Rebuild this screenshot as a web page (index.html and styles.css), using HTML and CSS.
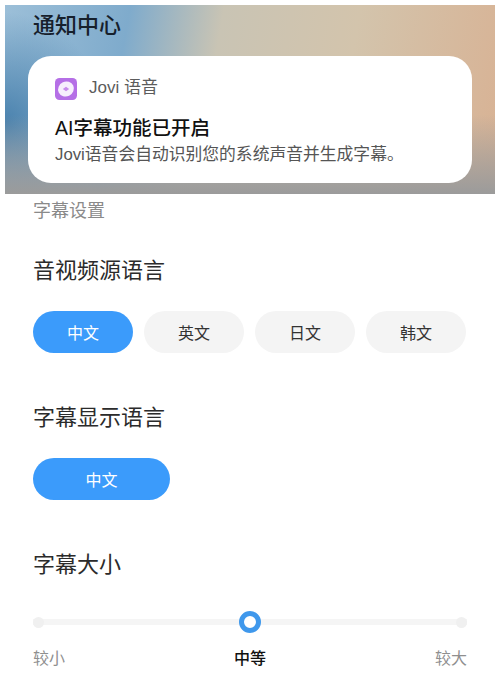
FILE: index.html
```html
<!DOCTYPE html>
<html lang="zh">
<head>
<meta charset="utf-8">
<title>字幕设置</title>
<link rel="stylesheet" href="styles.css">
</head>
<body>
<section class="hero">
  <h1 class="hero-title">通知中心</h1>
  <div class="card">
    <div class="app">
      <svg class="app-icon" viewBox="0 0 22 22" aria-hidden="true">
        <rect width="22" height="22" rx="4.5" fill="#b56fe6"/>
        <ellipse cx="11" cy="11" rx="8" ry="7.4" fill="#f6eefc" transform="rotate(-25 11 11)"/>
        <path d="M7.8 11 11 8.8l3.2 2.2L11 13.2z" fill="#c88cec"/>
      </svg>
      <span class="app-name">Jovi 语音</span>
    </div>
    <div class="card-title">AI字幕功能已开启</div>
    <div class="card-text">Jovi语音会自动识别您的系统声音并生成字幕。</div>
  </div>
</section>
<main class="settings">
  <div class="subtitle">字幕设置</div>
  <h2 class="heading first">音视频源语言</h2>
  <div class="options">
    <div class="pill active">中文</div>
    <div class="pill">英文</div>
    <div class="pill">日文</div>
    <div class="pill">韩文</div>
  </div>
  <h2 class="heading">字幕显示语言</h2>
  <div class="options">
    <div class="pill active wide">中文</div>
  </div>
  <h2 class="heading">字幕大小</h2>
  <div class="slider">
    <div class="track"><span class="end"></span><span class="knob"></span><span class="end"></span></div>
  </div>
  <div class="labels">
    <span>较小</span><span class="current">中等</span><span>较大</span>
  </div>
</main>
</body>
</html>
```

FILE: styles.css
```css
* { box-sizing: border-box; }
html, body { margin: 0; padding: 0; }
body {
  width: 500px;
  height: 682px;
  overflow: hidden;
  background: #fff;
  color: #2b2b2b;
  font-family: "Liberation Sans", "Noto Sans CJK SC", sans-serif;
}
.hero {
  margin: 5px 5px 0;
  height: 189px;
  padding: 7px 23px 0;
  background:
    linear-gradient(180deg, rgba(155,155,155,0) 58%, rgba(155,155,155,.55) 80%, rgba(155,155,155,1) 100%),
    radial-gradient(100px 110px at 0% 62%, #4a82ae 0%, rgba(74,130,174,0) 100%),
    linear-gradient(100deg, #9cbfd8 0%, #7fabcc 24%, #c9c4b4 42%, #d3c4ac 68%, #d8b294 100%);
}
.hero-title {
  margin: 0;
  font-size: 22px;
  line-height: 28px;
  font-weight: 500;
  color: #16202c;
  padding-left: 5px;
}
.card {
  margin-top: 16px;
  height: 127px;
  padding: 22px 27px 0;
  background: #fff;
  border-radius: 23px;
}
.app { display: flex; align-items: center; gap: 11px; height: 22px; }
.app-icon { width: 22px; height: 22px; display: block; }
.app-name { font-size: 17px; line-height: 20px; margin-bottom: 2px; margin-left: 1px; color: #5c5c5c; }
.card-title {
  margin-top: 16px;
  font-size: 19.5px;
  line-height: 24px;
  font-weight: 500;
  color: #111;
}
.card-text {
  margin-top: 4px;
  font-size: 16.8px;
  line-height: 22px;
  color: #555;
  white-space: nowrap;
}
.settings { padding: 6px 33px 0; }
.subtitle { font-size: 18px; line-height: 22px; color: #8a8a8a; }
.heading {
  margin: 50px 0 0;
  font-size: 22px;
  line-height: 30px;
  font-weight: 400;
  color: #2b2b2b;
}
.heading.first { margin-top: 34px; }
.options { display: flex; gap: 11px; margin-top: 25px; }
.pill {
  width: 100px;
  height: 42px;
  border-radius: 21px;
  background: #f4f4f4;
  color: #333;
  font-size: 16px;
  display: flex;
  align-items: center;
  justify-content: center;
}
.pill.active { background: #3b9bfb; color: #fff; }
.pill.wide { width: 137px; }
.slider { margin-top: 31px; height: 22px; display: flex; align-items: center; }
.track {
  flex: 1;
  height: 6px;
  background: #f5f5f5;
  display: flex;
  align-items: center;
  justify-content: space-between;
}
.end { width: 11px; height: 11px; border-radius: 50%; background: #f0f0f0; }
.knob {
  width: 22px;
  height: 22px;
  border-radius: 50%;
  background: #fff;
  border: 5px solid #3f98ec;
}
.labels {
  margin-top: 15px;
  display: flex;
  justify-content: space-between;
  font-size: 16px;
  line-height: 22px;
  color: #8f8f8f;
}
.labels .current { color: #111; font-weight: 500; }
```
